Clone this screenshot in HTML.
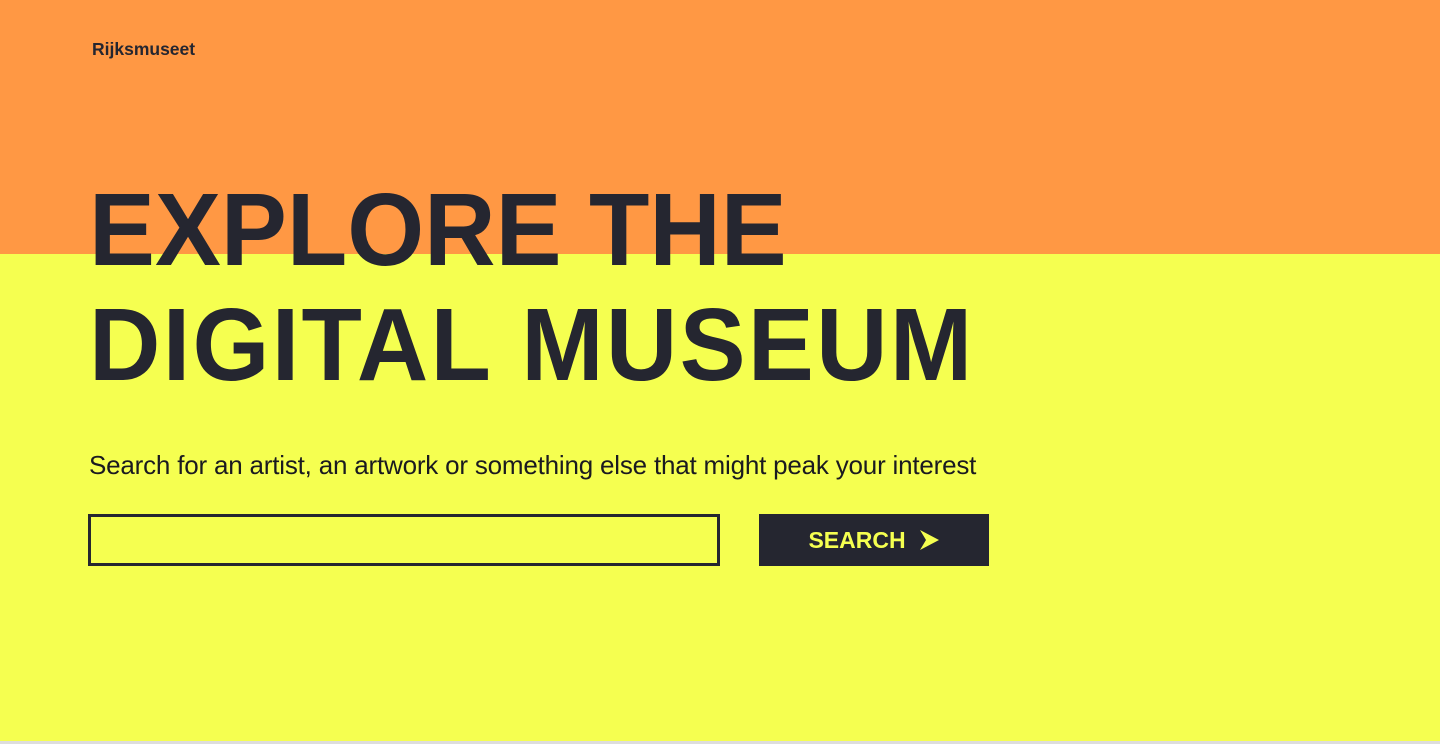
<!DOCTYPE html>
<html><head><style>
*{margin:0;padding:0;box-sizing:border-box}
body{width:1440px;height:744px;overflow:hidden;background:#f5ff50;font-family:"Liberation Sans",sans-serif;color:#252630;position:relative}
.top{position:absolute;left:0;top:0;width:1440px;height:254px;background:#ff9844}
.logo{position:absolute;left:92px;top:39px;font-size:17.5px;font-weight:bold}
h1{position:absolute;left:89px;top:172px;font-size:103px;line-height:115px;font-weight:bold;white-space:nowrap;transform:scaleX(0.96);transform-origin:0 0}
h1 .b{letter-spacing:2.4px}
p{position:absolute;left:89px;top:450px;font-size:26px;letter-spacing:-0.2px;color:#1a1a20;white-space:nowrap}
.in{position:absolute;left:88px;top:514px;width:632px;height:52px;border:3px solid #252630}
.btn{position:absolute;left:759px;top:514px;width:230px;height:52px;background:#252630;color:#f5ff50;font-weight:bold;font-size:23px;display:flex;align-items:center;justify-content:center;gap:12px}
.bot{position:absolute;left:0;top:741px;width:1440px;height:3px;background:#ddd}
</style></head><body>
<div class="top"></div>
<div class="logo">Rijksmuseet</div>
<h1><span class="a">EXPLORE THE</span><br><span class="b">DIGITAL MUSEUM</span></h1>
<p>Search for an artist, an artwork or something else that might peak your interest</p>
<div class="in"></div>
<div class="btn">SEARCH <svg width="22" height="22" viewBox="0 0 22 22"><path d="M2 1 L21 11 L2 21 L8 11 Z" fill="#f5ff50"/></svg></div>
<div class="bot"></div>
</body></html>
